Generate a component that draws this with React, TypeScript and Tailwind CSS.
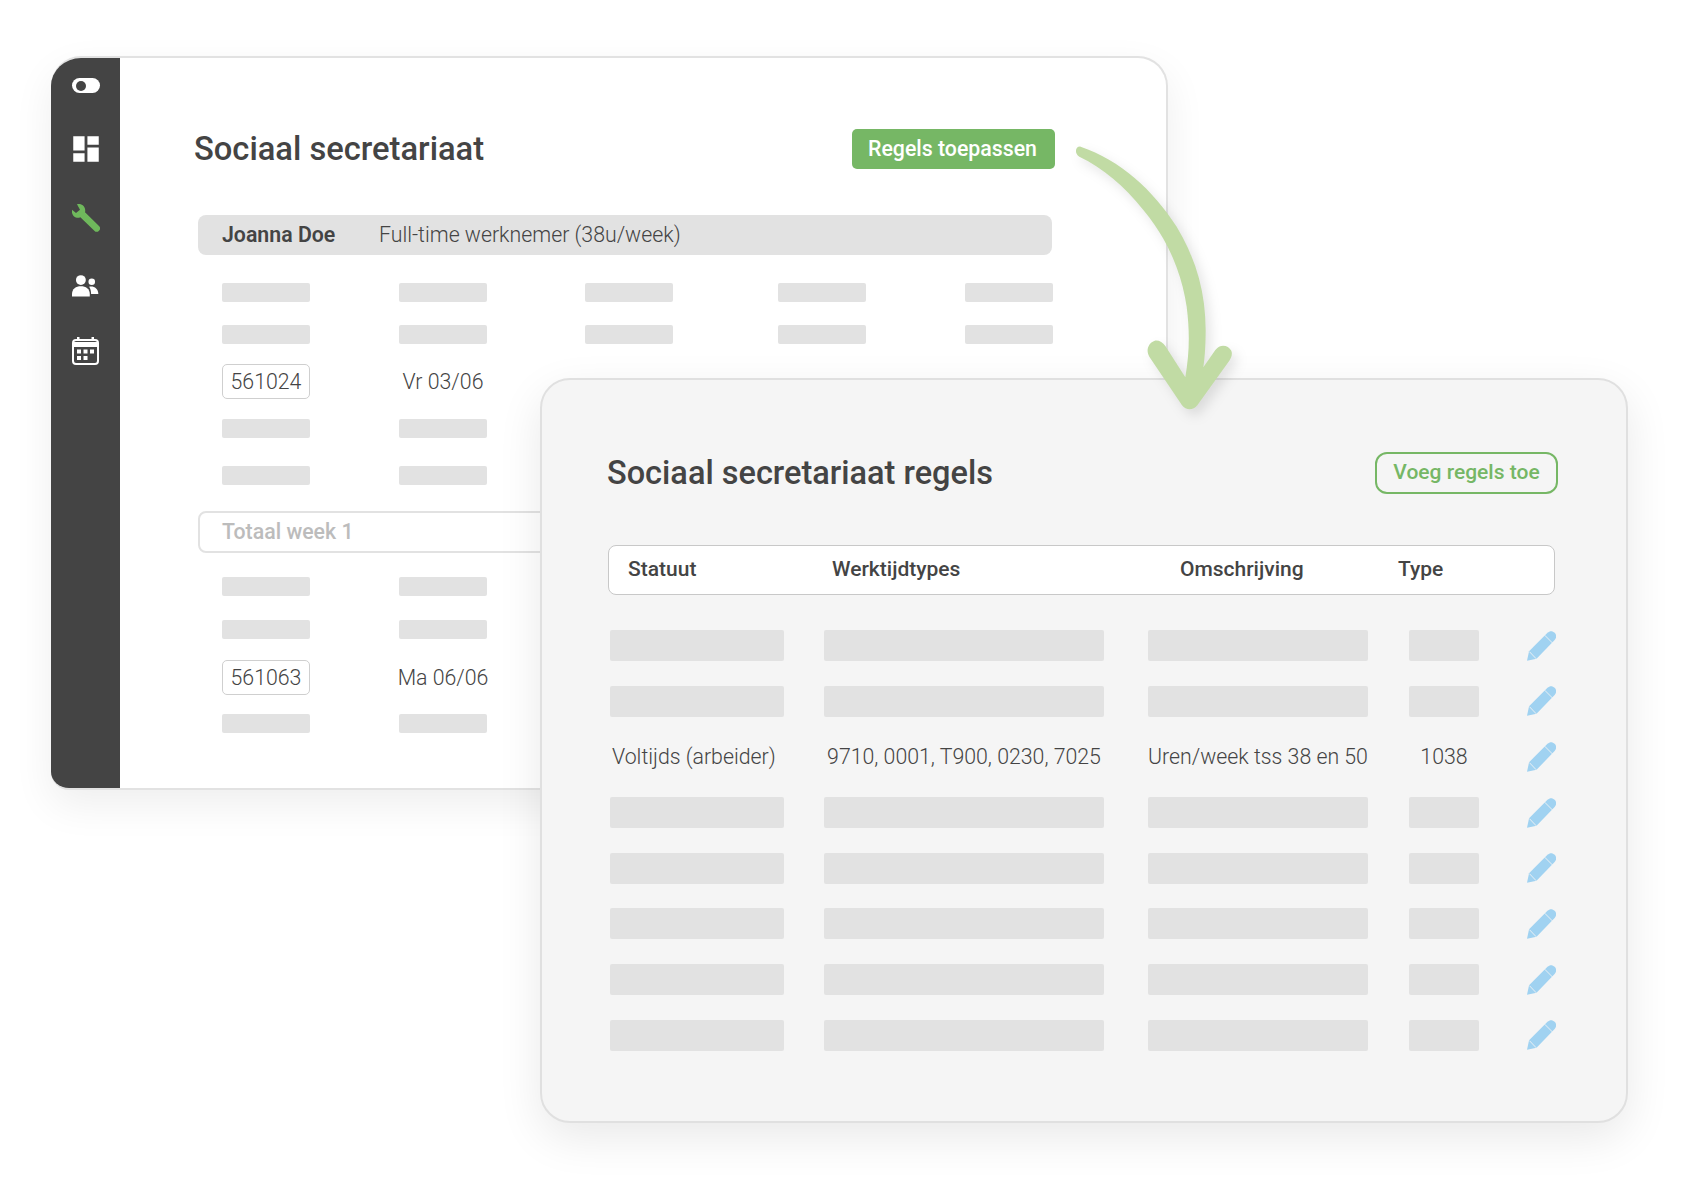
import { MdDashboard } from "react-icons/md";

function Bar({ className = "" }: { className?: string }) {
  return <div className={`bg-[#e2e2e2] rounded-[2px] ${className}`} />;
}

function Wrench() {
  return (
    <svg viewBox="35 28 84 84" className="w-7 h-7 fill-[#6fb85c]">
      <path d="M50 29C64 24 78 37 74 53L116 94a9.5 9.5 0 0 1-14 14L60 68C46 74 32 62 35 45L47 55L59 45Z" />
    </svg>
  );
}

function Users() {
  return (
    <svg viewBox="38 28 82 66" className="w-[27px] h-[22px] fill-white">
      <circle cx="65" cy="43" r="15" />
      <path d="M38 86C38 70 50 62 65 62C80 62 92 70 92 86V93H38Z" />
      <circle cx="98" cy="48" r="10" />
      <path d="M90 63C104 60 118 68 118 85H96C96 76 94 69 90 63Z" />
    </svg>
  );
}

function Calendar() {
  return (
    <svg viewBox="0 0 27 28" className="w-[27px] h-7 fill-white">
      <path d="M5 0h2.500v4H5zM19.500 0H22v4h-2.500z" />
      <rect x="1" y="3" width="25" height="24" rx="3" fill="none" stroke="white" strokeWidth="2" />
      <path d="M1 5h25v5H1z" />
      <rect x="5" y="12.500" width="4" height="4" />
      <rect x="11.500" y="12.500" width="4" height="4" />
      <rect x="18" y="12.500" width="4" height="4" />
      <rect x="5" y="19" width="4" height="4" />
      <rect x="11.500" y="19" width="4" height="4" />
    </svg>
  );
}

function Pencil() {
  return (
    <svg viewBox="0 0 85 87" className="w-[29px] h-[30px]">
      <path
        d="M0 87L6 59L60 5C67 -2 75 -1 81 5C87 11 87 19 81 26L28 81Z"
        fill="#a0d2f1"
      />
      <path d="M52 12L75 35M7 60L27 81" stroke="#f5f5f5" strokeWidth="2.500" fill="none" />
    </svg>
  );
}

function Arrow() {
  return (
    <svg
      viewBox="0 0 720 900"
      className="absolute left-[1040px] top-[130px] w-[240px] h-[300px] fill-[#c1dba4] drop-shadow-[5px_6px_6px_rgba(0,0,0,0.1)]"
    >
      <path d="M122 50C240 90 340 180 410 290C470 390 497 490 497 600C497 640 495 680 490 712L526 660C540 640 565 645 574 662C578 672 574 684 568 692L472 826C460 842 438 842 426 826L328 680C316 660 326 638 344 632C356 630 368 636 376 648L436 742C448 670 450 610 440 530C425 430 385 330 310 240C250 165 190 115 118 80C102 70 106 48 122 50Z" />
    </svg>
  );
}

const backCols = "grid grid-cols-[177px_186px_193px_187px_88px] items-center";

function BackRow({ className = "", cols = 2 }: { className?: string; cols?: number }) {
  return (
    <div className={`${backCols} ml-7 ${className}`}>
      {Array.from({ length: cols }).map((_, i) => (
        <Bar key={i} className="w-[88px] h-[19px]" />
      ))}
    </div>
  );
}

function DayRow({ code, day, className = "" }: { code: string; day: string; className?: string }) {
  return (
    <div className={`${backCols} ml-7 ${className}`}>
      <div className="w-[88px] h-[35px] border border-[#cfcfcf] rounded-[5px] flex items-center justify-center text-[21.3px] font-light">
        {code}
      </div>
      <div className="w-[88px] flex justify-center text-[21.3px] font-light whitespace-nowrap">{day}</div>
    </div>
  );
}

function BackWindow() {
  return (
    <div className="absolute left-[51px] top-[56px] w-[1117px] h-[734px] flex rounded-[30px] rounded-bl-[18px] overflow-hidden bg-white border-y-2 border-r-2 border-[#e2e2e2] shadow-[0_15px_40px_rgba(0,0,0,0.07)]">
      <div className="w-[69px] shrink-0 bg-[#444444] flex flex-col items-center pt-[20px]">
        <div className="w-7 h-[15px] rounded-full bg-white flex items-center pl-[4px]">
          <div className="w-[10px] h-[10px] rounded-full bg-[#444444]" />
        </div>
        <MdDashboard className="mt-[39px] w-[34px] h-[34px] text-white" />
        <div className="mt-[38px]">
          <Wrench />
        </div>
        <div className="mt-[43px]">
          <Users />
        </div>
        <div className="mt-[40px]">
          <Calendar />
        </div>
      </div>
      <div className="flex-1 pl-[74px] pt-[71px]">
        <div className="w-[861px] h-10 flex items-center justify-between">
          <h1 className="text-[32.7px] font-medium leading-10">Sociaal secretariaat</h1>
          <div className="w-[203px] h-10 pr-0.5 rounded-[5px] bg-[#76b765] text-white text-[21.3px] font-medium flex items-center justify-center">
            Regels toepassen
          </div>
        </div>
        <div className="ml-1 mt-[46px] w-[854px] h-10 pb-px rounded-lg bg-[#e2e2e2] flex items-center pl-6 text-[21.3px]">
          <span className="font-semibold w-[157px]">Joanna Doe</span>
          <span className="font-light">Full-time werknemer (38u/week)</span>
        </div>
        <BackRow cols={5} className="mt-[28px]" />
        <BackRow cols={5} className="mt-[23px]" />
        <DayRow code="561024" day="Vr 03/06" className="mt-[20px]" />
        <BackRow className="mt-[20px]" />
        <BackRow className="mt-[28px]" />
        <div className="ml-1 mt-[26px] w-[855px] h-[42px] rounded-lg border-2 border-[#e2e2e2] flex items-center pl-[22px] text-[21.3px] font-medium text-[#bcbcbc]">
          Totaal week 1
        </div>
        <BackRow className="mt-[24px]" />
        <BackRow className="mt-[24px]" />
        <DayRow code="561063" day="Ma 06/06" className="mt-[21px]" />
        <BackRow className="mt-[19px]" />
      </div>
    </div>
  );
}

const frontCols = "grid grid-cols-[214px_324px_261px_118px_29px] items-center h-[31px]";

function RuleRow() {
  return (
    <div className={frontCols}>
      <Bar className="w-[174px] h-[31px]" />
      <Bar className="w-[280px] h-[31px]" />
      <Bar className="w-[220px] h-[31px]" />
      <Bar className="w-[70px] h-[31px]" />
      <Pencil />
    </div>
  );
}

function FrontWindow() {
  return (
    <div className="absolute left-[540px] top-[378px] w-[1088px] h-[745px] rounded-[30px] bg-[#f5f5f5] border-2 border-[#e0e0e0] shadow-[0_15px_45px_rgba(0,0,0,0.09)] pl-[65px] pt-[72px]">
      <div className="w-[951px] h-[42px] flex items-center justify-between">
        <h1 className="text-[32.5px] font-medium leading-10">Sociaal secretariaat regels</h1>
        <div className="w-[183px] h-[42px] pb-px rounded-xl border-2 border-[#76b765] text-[#76b765] text-[21px] font-medium flex items-center justify-center">
          Voeg regels toe
        </div>
      </div>
      <div className="ml-px mt-[51px] w-[947px] h-[50px] rounded-lg bg-white border border-[#c8c8c8] pl-[19px] grid grid-cols-[204px_348px_218px_1fr] items-center text-[21px] font-medium">
        <span>Statuut</span>
        <span>Werktijdtypes</span>
        <span>Omschrijving</span>
        <span>Type</span>
      </div>
      <div className="ml-[3px] mt-[35px] flex flex-col gap-[24.7px]">
        <RuleRow />
        <RuleRow />
        <div className={`${frontCols} text-[21.3px] font-light whitespace-nowrap`}>
          <span className="pl-0.5">Voltijds (arbeider)</span>
          <span className="w-[280px] flex justify-center">9710, 0001, T900, 0230, 7025</span>
          <span className="w-[220px] flex justify-center">Uren/week tss 38 en 50</span>
          <span className="w-[70px] text-center">1038</span>
          <Pencil />
        </div>
        <RuleRow />
        <RuleRow />
        <RuleRow />
        <RuleRow />
        <RuleRow />
      </div>
    </div>
  );
}

export default function App() {
  return (
    <div className="relative w-[1697px] h-[1200px] overflow-hidden bg-white text-[#444444] font-['Roboto',sans-serif]">
      <BackWindow />
      <FrontWindow />
      <Arrow />
    </div>
  );
}
